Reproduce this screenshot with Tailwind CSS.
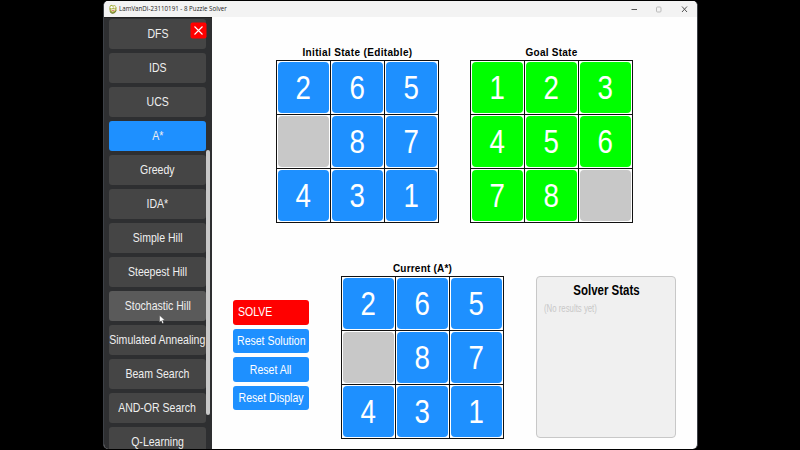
<!DOCTYPE html>
<html lang="en">
<head>
<meta charset="utf-8">
<title>8 Puzzle Solver</title>
<script src="https://cdn.jsdelivr.net/npm/@tailwindcss/browser@4"></script>
</head>
<body class="bg-black w-[800px] h-[450px] overflow-hidden font-['Liberation_Sans',Arial,sans-serif]">
<div class="ml-[103px] w-[595px] h-[450px] pt-px flex flex-col">
  <div class="w-[595px] h-[448px] rounded-[5px] overflow-hidden bg-[#fefefe] border-x border-[#3c4046] flex flex-col">
    <header class="h-4 shrink-0 bg-[#f3f3f3] flex items-center pl-[5px] pr-[8px]">
      <svg class="w-[8px] h-[10px] shrink-0" viewBox="0 0 8 10"><path d="M.6 2.2 2 .8 4 1.6 6 1.2 7.6 3.5 7.4 6.5 5.5 9 3 9.4.9 7.8.3 5Z" fill="#a3ad3c"/><path d="M1.5 5.6 6.3 4.6 6 6.8 3.2 7.8Z" fill="#f4efd6"/><circle cx="2.6" cy="3.2" r="1.2" fill="#fff"/><circle cx="5.4" cy="3.1" r="1.2" fill="#f7f3df"/><path d="M2.6 6.8 5.6 6.2" stroke="#c4473a" stroke-width=".7"/><path d="M.9 7.8 3 9.3 5.5 8.9 7.3 6.6" fill="none" stroke="#5c6928" stroke-width=".8"/></svg>
      <span class="ml-[2px] w-[120px] text-[7px] leading-[16px] whitespace-nowrap text-[#222] font-['Open_Sans',sans-serif]"><span class="inline-block origin-left scale-x-[.885]">LamVanDi-23110191 - 8 Puzzle Solver</span></span>
      <svg class="ml-auto w-[60px] h-4" viewBox="0 0 60 16" fill="none" stroke="#555" stroke-width="1"><path d="M2.5 8.5h5.5"/><rect x="27.5" y="6" width="4.5" height="5" rx="1" stroke="#bbb"/><path d="M53 5.5l5 5.5m0-5.5l-5 5.5"/></svg>
    </header>
    <div class="flex h-[432px]">
      <aside class="relative w-[107.5px] h-[432px] shrink-0 overflow-hidden bg-[#2e2f31] border-t border-[#222] pt-px pl-[5px] flex flex-col gap-[4px] text-[13px] text-[#efefef] text-center">
        <div class="w-[97px] h-[30px] shrink-0 rounded-[3px] bg-[#454545] flex items-center justify-center whitespace-nowrap"><span class="scale-x-[.81]">DFS</span></div>
        <div class="w-[97px] h-[30px] shrink-0 rounded-[3px] bg-[#454545] flex items-center justify-center whitespace-nowrap"><span class="scale-x-[.81]">IDS</span></div>
        <div class="w-[97px] h-[30px] shrink-0 rounded-[3px] bg-[#454545] flex items-center justify-center whitespace-nowrap"><span class="scale-x-[.81]">UCS</span></div>
        <div class="w-[97px] h-[30px] shrink-0 rounded-[3px] bg-[#1e90ff] flex items-center justify-center whitespace-nowrap"><span class="scale-x-[.81]">A*</span></div>
        <div class="w-[97px] h-[30px] shrink-0 rounded-[3px] bg-[#454545] flex items-center justify-center whitespace-nowrap"><span class="scale-x-[.81]">Greedy</span></div>
        <div class="w-[97px] h-[30px] shrink-0 rounded-[3px] bg-[#454545] flex items-center justify-center whitespace-nowrap"><span class="scale-x-[.81]">IDA*</span></div>
        <div class="w-[97px] h-[30px] shrink-0 rounded-[3px] bg-[#454545] flex items-center justify-center whitespace-nowrap"><span class="scale-x-[.81]">Simple Hill</span></div>
        <div class="w-[97px] h-[30px] shrink-0 rounded-[3px] bg-[#454545] flex items-center justify-center whitespace-nowrap"><span class="scale-x-[.81]">Steepest Hill</span></div>
        <div class="w-[97px] h-[30px] shrink-0 rounded-[3px] bg-[#5a5a5a] flex items-center justify-center whitespace-nowrap"><span class="scale-x-[.81]">Stochastic Hill</span></div>
        <div class="w-[97px] h-[30px] shrink-0 rounded-[3px] bg-[#454545] flex items-center justify-center whitespace-nowrap"><span class="scale-x-[.81]">Simulated Annealing</span></div>
        <div class="w-[97px] h-[30px] shrink-0 rounded-[3px] bg-[#454545] flex items-center justify-center whitespace-nowrap"><span class="scale-x-[.81]">Beam Search</span></div>
        <div class="w-[97px] h-[30px] shrink-0 rounded-[3px] bg-[#454545] flex items-center justify-center whitespace-nowrap"><span class="scale-x-[.81]">AND-OR Search</span></div>
        <div class="w-[97px] h-[30px] shrink-0 rounded-[3px] bg-[#454545] flex items-center justify-center whitespace-nowrap"><span class="scale-x-[.81]">Q-Learning</span></div>
        <div class="absolute left-[102px] top-[132px] w-[4px] h-[265px] rounded-[2px] bg-[#c8c8c8]"></div>
        <svg class="absolute left-[86px] top-[4px] w-[17px] h-[17px]" viewBox="0 0 17 17"><rect x=".5" y=".5" width="16" height="16" rx="2" fill="#f00"/><path d="M4.5 4.5l8 8m0-8l-8 8" stroke="#fff" stroke-width="1.1"/></svg>
        <svg class="absolute left-[55px] top-[297px] w-[7px] h-[9px]" viewBox="0 0 7 9"><path d="M.5.3V7.3L2.2 5.8 3.4 8.6 4.7 8 3.6 5.3H6Z" fill="#fff" stroke="#333" stroke-width=".4"/></svg>
      </aside>
      <main class="flex-1 pt-[28px] pl-[64.5px]">
        <div class="flex gap-[31px]">
          <section class="w-[163px]">
            <h2 class="h-[15px] leading-[15px] text-[10px] font-bold text-center whitespace-nowrap text-black tracking-[.35px]">Initial State (Editable)</h2>
            <div class="grid grid-cols-3 gap-px bg-[#111] p-px w-[163px] h-[163px] text-[33px] leading-none text-white *:bg-white *:p-px *:h-[53px] *:*:h-[51px] *:*:rounded-[4px] *:*:flex *:*:items-center *:*:justify-center">
              <div><div class="bg-[#1e90ff]"><span class="scale-x-[.84]">2</span></div></div>
              <div><div class="bg-[#1e90ff]"><span class="scale-x-[.84]">6</span></div></div>
              <div><div class="bg-[#1e90ff]"><span class="scale-x-[.84]">5</span></div></div>
              <div><div class="bg-[#c8c8c8]"></div></div>
              <div><div class="bg-[#1e90ff]"><span class="scale-x-[.84]">8</span></div></div>
              <div><div class="bg-[#1e90ff]"><span class="scale-x-[.84]">7</span></div></div>
              <div><div class="bg-[#1e90ff]"><span class="scale-x-[.84]">4</span></div></div>
              <div><div class="bg-[#1e90ff]"><span class="scale-x-[.84]">3</span></div></div>
              <div><div class="bg-[#1e90ff]"><span class="scale-x-[.84]">1</span></div></div>
            </div>
          </section>
          <section class="w-[163px]">
            <h2 class="h-[15px] leading-[15px] text-[10px] font-bold text-center whitespace-nowrap text-black tracking-[.25px]">Goal State</h2>
            <div class="grid grid-cols-3 gap-px bg-[#111] p-px w-[163px] h-[163px] text-[33px] leading-none text-white *:bg-white *:p-px *:h-[53px] *:*:h-[51px] *:*:rounded-[4px] *:*:flex *:*:items-center *:*:justify-center">
              <div><div class="bg-[#0f0]"><span class="scale-x-[.84]">1</span></div></div>
              <div><div class="bg-[#0f0]"><span class="scale-x-[.84]">2</span></div></div>
              <div><div class="bg-[#0f0]"><span class="scale-x-[.84]">3</span></div></div>
              <div><div class="bg-[#0f0]"><span class="scale-x-[.84]">4</span></div></div>
              <div><div class="bg-[#0f0]"><span class="scale-x-[.84]">5</span></div></div>
              <div><div class="bg-[#0f0]"><span class="scale-x-[.84]">6</span></div></div>
              <div><div class="bg-[#0f0]"><span class="scale-x-[.84]">7</span></div></div>
              <div><div class="bg-[#0f0]"><span class="scale-x-[.84]">8</span></div></div>
              <div><div class="bg-[#c8c8c8]"></div></div>
            </div>
          </section>
        </div>
        <div class="flex mt-[38px] -ml-[43px]">
          <div class="w-[76px] mt-[39px] flex flex-col gap-[4px] text-[13px] text-white whitespace-nowrap">
            <div class="h-[24.5px] rounded-[3px] bg-[#f00] flex items-center pl-[5px] pb-[2px]"><span class="origin-left scale-x-[.81]">SOLVE</span></div>
            <div class="h-[24.5px] rounded-[3px] bg-[#1e90ff] flex items-center justify-center"><span class="scale-x-[.81]">Reset Solution</span></div>
            <div class="h-[24.5px] rounded-[3px] bg-[#1e90ff] flex items-center justify-center"><span class="scale-x-[.81]">Reset All</span></div>
            <div class="h-[24.5px] rounded-[3px] bg-[#1e90ff] flex items-center justify-center"><span class="scale-x-[.81]">Reset Display</span></div>
          </div>
          <section class="w-[163px] ml-[32px]">
            <h2 class="h-[15px] leading-[15px] text-[10px] font-bold text-center whitespace-nowrap text-black tracking-[.2px]">Current (A*)</h2>
            <div class="grid grid-cols-3 gap-px bg-[#111] p-px w-[163px] h-[163px] text-[33px] leading-none text-white *:bg-white *:p-px *:h-[53px] *:*:h-[51px] *:*:rounded-[4px] *:*:flex *:*:items-center *:*:justify-center">
              <div><div class="bg-[#1e90ff]"><span class="scale-x-[.84]">2</span></div></div>
              <div><div class="bg-[#1e90ff]"><span class="scale-x-[.84]">6</span></div></div>
              <div><div class="bg-[#1e90ff]"><span class="scale-x-[.84]">5</span></div></div>
              <div><div class="bg-[#c8c8c8]"></div></div>
              <div><div class="bg-[#1e90ff]"><span class="scale-x-[.84]">8</span></div></div>
              <div><div class="bg-[#1e90ff]"><span class="scale-x-[.84]">7</span></div></div>
              <div><div class="bg-[#1e90ff]"><span class="scale-x-[.84]">4</span></div></div>
              <div><div class="bg-[#1e90ff]"><span class="scale-x-[.84]">3</span></div></div>
              <div><div class="bg-[#1e90ff]"><span class="scale-x-[.84]">1</span></div></div>
            </div>
          </section>
          <section class="ml-[32px] mt-[15px] w-[140px] h-[162px] rounded-[4px] border border-[#c8c8c8] bg-[#f0f0f0] whitespace-nowrap">
            <h2 class="mt-[4px] text-center text-[14px] leading-[18px] font-bold text-black"><span class="inline-block scale-x-[.82]">Solver Stats</span></h2>
            <p class="mt-px pl-[7px] text-[10px] leading-[17px] text-[#c8c8c8]"><span class="inline-block origin-left scale-x-[.78]">(No results yet)</span></p>
          </section>
        </div>
      </main>
    </div>
  </div>
</div>
</body>
</html>
